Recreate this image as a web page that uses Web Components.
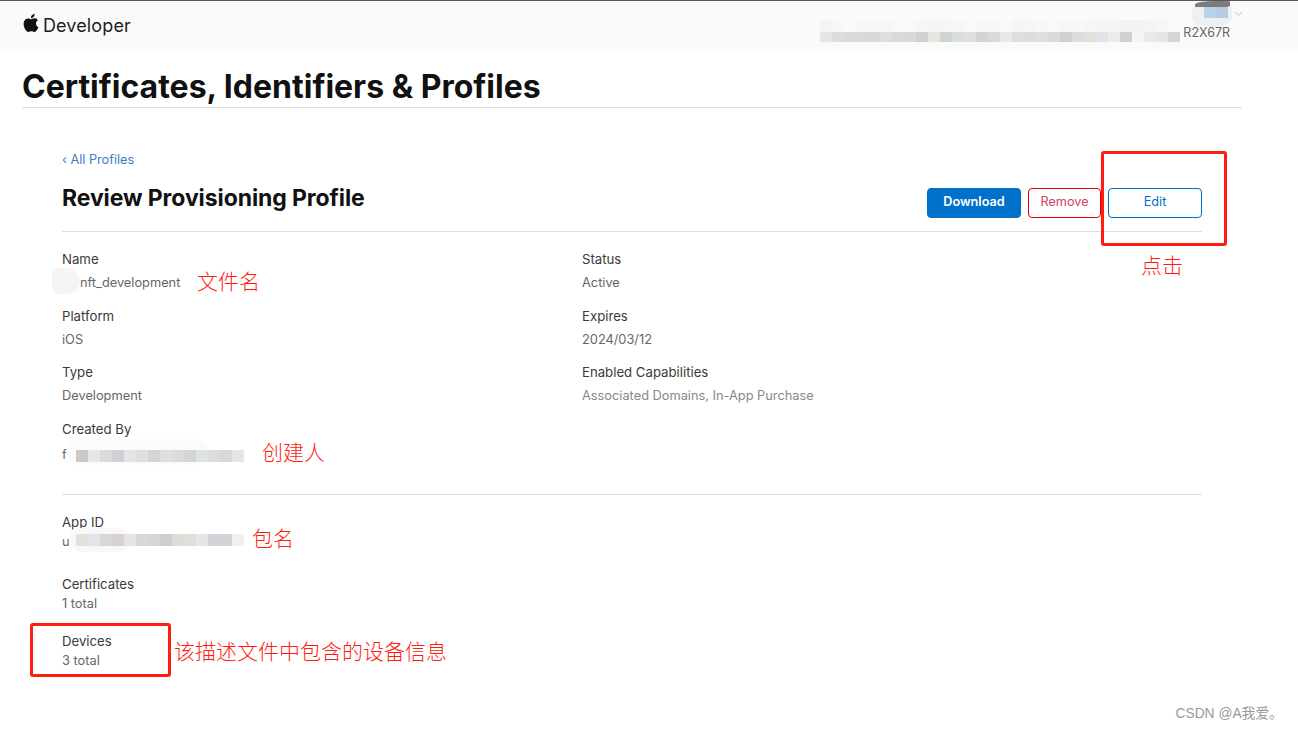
<!DOCTYPE html>
<html lang="en">
<head>
<meta charset="utf-8">
<title>Review Provisioning Profile</title>
<style>
  html, body { margin: 0; height: 100%; overflow: hidden; background: #fff; }
  body { font-family: Inter, "Liberation Sans", "Noto Sans CJK SC", sans-serif; position: relative; }
</style>
</head>
<body>
<dev-header account="R2X67R"></dev-header>
<page-title>Certificates, Identifiers &amp; Profiles</page-title>
<profile-view>
  <profile-head slot="head" back="All Profiles" title="Review Provisioning Profile"></profile-head>

  <profile-section>
    <info-field label="Name" indent>nft_development</info-field>
    <info-field label="Status">Active</info-field>
    <info-field label="Platform">iOS</info-field>
    <info-field label="Expires">2024/03/12</info-field>
    <info-field label="Type">Development</info-field>
    <info-field label="Enabled Capabilities" muted>Associated Domains, In-App Purchase</info-field>
    <info-field label="Created By" tall>f</info-field>
  </profile-section>

  <profile-section single>
    <info-field label="App ID" tight spaced>u</info-field>
    <info-field label="Certificates" tight>1 total</info-field>
    <info-field label="Devices" tight>3 total</info-field>
  </profile-section>
</profile-view>

<!-- redactions and red notes that sit over the page -->
<smear-blob x="52" y="268" w="28" h="26" color="#f5f5f5" radius="30% 55% 50% 25%"></smear-blob>
<mosaic-patch x="820" y="30" colors="e6e6e6 dedcda dcdad8 d8dad8 d8d8d8 dcdee0 dad8d8 dad8d6 cfd1d3 e8e4de d0d2d4 d8dde0 e0dfda d2d4d6 d8dada e8e8e8 dfdedc dcdcda e0dfdc dcdad8 d0d0d0 dcdde2 e2e0da e2e3e6 ebebeb cfd1cf f4f4f4 ebeae8 e6e6e6 d6d6d4"></mosaic-patch>
<mosaic-patch x="820" y="20" colors="f4f4f4 f7f7f7 fafafa f8f8f8 f7f7f7 f7f7f7 f9f9f9 f9f9f9 f6f6f6 f5f5f5 f6f6f6 f7f7f7 f9f9f9 f8f8f8 f7f7f7 f9f9f9 f5f5f5 f6f6f6 f8f8f8 f9f9f9 f7f7f7 f8f8f8 f6f6f6 f5f5f5 f5f5f5 f3f3f3 f3f3f3 f4f4f4 f6f6f6 f9f9f9"></mosaic-patch>
<smear-blob x="1192" y="4" w="40" h="23" color="#eceff3" radius="30% 30% 45% 45%"></smear-blob>
<mosaic-patch x="1204" y="6" colors="b8d2ea b8cbe3"></mosaic-patch>
<smear-blob x="1195" y="1" w="35" h="6" color="#7b7b7d" radius="60% 10% 20% 10%"></smear-blob>

<smear-blob x="68" y="439" w="140" h="26" color="#fbfbfb" radius="12px"></smear-blob>
<mosaic-patch x="76" y="450" colors="cdc9c9 e6e7e8 dcdcd8 cfd1d4 e4e5e6 dedfe0 d6d3d4 dfdfdf dcdcdc d4d5d5 dfe3e5 dedddb d9d8d9 e5e6e6"></mosaic-patch>
<smear-blob x="70" y="528" w="60" h="24" color="#f8f8f8" radius="12px"></smear-blob>
<mosaic-patch x="76" y="534" colors="e2e2da e3e4e8 d8d6d8 d8d2d6 e6e6e6 d8d8da d6d6d2 cfcfcd dcdcd8 dddfda e6e6e6 d5d3da d4d2d6 f0f0f0"></mosaic-patch>

<note-box x="1101" y="151" w="126" h="95"></note-box>
<note-box x="30" y="623" w="141" h="54"></note-box>
<note-text x="197" y="268">文件名</note-text>
<note-text x="1141" y="252">点击</note-text>
<note-text x="262" y="439">创建人</note-text>
<note-text x="252" y="525">包名</note-text>
<note-text x="174" y="638">该描述文件中包含的设备信息</note-text>
<water-mark>CSDN @A我爱。</water-mark>

<script>
class DevHeader extends HTMLElement {
  connectedCallback() {
    this.attachShadow({ mode: 'open' });
    this.shadowRoot.innerHTML = `
      <style>
        :host {
          display: flex;
          justify-content: space-between;
          height: 50px;
          padding: 0 68px 0 22px;
          background: #fafafa;
          border-top: 1px solid #58585a;
        }
        .brand { display: flex; align-items: center; gap: 3px; height: 48px; color: #1d1d1f; font-size: 18px; letter-spacing: 0.12px; }
        .brand svg { width: 18px; height: 20px; margin-top: -5px; fill: #111; }
        .account { align-self: flex-end; margin-bottom: 10px; font-size: 12.5px; line-height: 16px; color: #666; }
        .chev { position: absolute; left: 1234px; top: 11px; width: 9px; height: 6px; fill: none; stroke: #a9c6e6; stroke-width: 1; }
      </style>
      <div class="brand">
        <svg viewBox="0 0 24 24"><path d="M12.152 6.896c-.948 0-2.415-1.078-3.96-1.04-2.04.027-3.91 1.183-4.961 3.014-2.117 3.675-.546 9.103 1.519 12.09 1.013 1.454 2.208 3.09 3.792 3.039 1.52-.065 2.09-.987 3.935-.987 1.831 0 2.35.987 3.96.948 1.637-.026 2.676-1.48 3.676-2.948 1.156-1.688 1.636-3.325 1.662-3.415-.039-.013-3.182-1.221-3.22-4.857-.026-3.04 2.48-4.494 2.597-4.559-1.429-2.09-3.623-2.324-4.39-2.376-2-.156-3.675 1.09-4.61 1.09zM15.53 3.83c.843-1.012 1.4-2.427 1.245-3.83-1.207.052-2.662.805-3.532 1.818-.78.896-1.454 2.338-1.273 3.714 1.338.104 2.715-.688 3.559-1.701"/></svg>
        <span>Developer</span>
      </div>
      <span class="account">${this.getAttribute('account')}</span>
      <svg class="chev" viewBox="0 0 9 6"><path d="M1 1l3.5 3.5L8 1"/></svg>
    `;
  }
}

class PageTitle extends HTMLElement {
  connectedCallback() {
    this.attachShadow({ mode: 'open' });
    this.shadowRoot.innerHTML = `
      <style>
        :host {
          display: block;
          margin: 0 56px 0 22px;
          height: 56px;
          border-bottom: 1px solid #dedede;
          color: #111;
          font-size: 32px;
          font-weight: 700;
          line-height: 71px;
          white-space: nowrap;
        }
      </style>
      <slot></slot>
    `;
  }
}

class ProfileView extends HTMLElement {
  connectedCallback() {
    this.attachShadow({ mode: 'open' });
    this.shadowRoot.innerHTML = `
      <style>
        :host { display: block; padding: 42px 96px 0 62px; }
      </style>
      <slot name="head"></slot>
      <slot></slot>
    `;
  }
}

class ProfileHead extends HTMLElement {
  connectedCallback() {
    this.attachShadow({ mode: 'open' });
    this.shadowRoot.innerHTML = `
      <style>
        :host { display: block; border-bottom: 1px solid #dedede; height: 81px; }
        a { display: block; color: #3d7cc9; font-size: 12.7px; line-height: 20px; text-decoration: none; }
        .row { display: flex; align-items: center; justify-content: space-between; height: 38px; margin-top: 9px; }
        h2 { margin: 0; color: #111; font-size: 23px; font-weight: 700; letter-spacing: -0.1px; line-height: 38px; }
        .actions { display: flex; gap: 7px; margin-top: 10px; }
      </style>
      <a href="#">‹ ${this.getAttribute('back')}</a>
      <div class="row">
        <h2>${this.getAttribute('title')}</h2>
        <div class="actions">
          <action-button kind="primary">Download</action-button>
          <action-button kind="danger">Remove</action-button>
          <action-button kind="plain">Edit</action-button>
        </div>
      </div>
    `;
  }
}

class ActionButton extends HTMLElement {
  connectedCallback() {
    this.attachShadow({ mode: 'open' });
    const kind = this.getAttribute('kind');
    const look = {
      primary: 'width:94px; background:#0070c9; border-color:#0070c9; color:#fff; font-weight:600;',
      danger: 'width:73px; background:#fff; border-color:#e30000; color:#d6405f;',
      plain: 'width:94px; background:#fff; border-color:#0070c9; color:#0070c9;'
    }[kind];
    this.shadowRoot.innerHTML = `
      <style>
        :host { display: block; }
        button {
          display: block;
          box-sizing: border-box;
          height: 30px;
          padding: 0 0 3px;
          border: 1px solid;
          border-radius: 4px;
          font: inherit;
          font-size: 12.7px;
          cursor: pointer;
          ${look}
        }
      </style>
      <button><slot></slot></button>
    `;
  }
}

class ProfileSection extends HTMLElement {
  connectedCallback() {
    this.attachShadow({ mode: 'open' });
    const single = this.hasAttribute('single');
    this.shadowRoot.innerHTML = `
      <style>
        :host {
          display: grid;
          grid-template-columns: ${single ? '1fr' : '520px 1fr'};
          row-gap: ${single ? '19px' : '9.5px'};
          padding: ${single ? '18px 0 0' : '16px 0 0'};
          ${single ? '' : 'height: 246px; align-content: start; border-bottom: 1px solid #dedede;'}
        }
      </style>
      <slot></slot>
    `;
  }
}

class InfoField extends HTMLElement {
  connectedCallback() {
    this.attachShadow({ mode: 'open' });
    const tight = this.hasAttribute('tight');
    const tall = this.hasAttribute('tall');
    this.shadowRoot.innerHTML = `
      <style>
        :host { display: block; font-size: 12.8px; ${this.hasAttribute('spaced') ? 'margin-bottom: 5px;' : ''} }
        .label { color: #3a3a3a; font-size: 13.2px; line-height: ${tight ? '19px' : '23px'}; }
        .value {
          color: ${this.hasAttribute('muted') ? '#888' : '#666'};
          line-height: ${tight ? '19px' : tall ? '28px' : '24px'};
          ${this.hasAttribute('indent') ? 'padding-left: 18px;' : ''}
        }
      </style>
      <div class="label">${this.getAttribute('label')}</div>
      <div class="value"><slot></slot></div>
    `;
  }
}

class MosaicPatch extends HTMLElement {
  connectedCallback() {
    this.attachShadow({ mode: 'open' });
    const cells = this.getAttribute('colors').split(' ')
      .map(c => `<i style="background:#${c}"></i>`).join('');
    this.shadowRoot.innerHTML = `
      <style>
        :host { position: absolute; left: ${this.getAttribute('x')}px; top: ${this.getAttribute('y')}px; display: flex; }
        i { display: block; width: 12px; height: 12px; }
      </style>
      ${cells}
    `;
  }
}

class SmearBlob extends HTMLElement {
  connectedCallback() {
    this.attachShadow({ mode: 'open' });
    this.shadowRoot.innerHTML = `
      <style>
        :host {
          position: absolute;
          left: ${this.getAttribute('x')}px;
          top: ${this.getAttribute('y')}px;
          width: ${this.getAttribute('w')}px;
          height: ${this.getAttribute('h')}px;
          border-radius: ${this.getAttribute('radius') || '40%'};
          background: ${this.getAttribute('color') || '#f4f4f4'};
        }
      </style>
    `;
  }
}

class NoteBox extends HTMLElement {
  connectedCallback() {
    this.attachShadow({ mode: 'open' });
    this.shadowRoot.innerHTML = `
      <style>
        :host {
          position: absolute;
          box-sizing: border-box;
          left: ${this.getAttribute('x')}px;
          top: ${this.getAttribute('y')}px;
          width: ${this.getAttribute('w')}px;
          height: ${this.getAttribute('h')}px;
          border: 3px solid #ff1d12;
          border-radius: 3px;
        }
      </style>
    `;
  }
}

class NoteText extends HTMLElement {
  connectedCallback() {
    this.attachShadow({ mode: 'open' });
    this.shadowRoot.innerHTML = `
      <style>
        :host {
          position: absolute;
          left: ${this.getAttribute('x')}px;
          top: ${this.getAttribute('y')}px;
          color: #ff1d12;
          font-family: "Noto Sans CJK SC", sans-serif;
          font-size: 21px;
          font-weight: 300;
          line-height: 24px;
          white-space: nowrap;
        }
      </style>
      <slot></slot>
    `;
  }
}

class WaterMark extends HTMLElement {
  connectedCallback() {
    this.attachShadow({ mode: 'open' });
    this.shadowRoot.innerHTML = `
      <style>
        :host {
          position: absolute;
          right: 15px;
          top: 704px;
          color: #9a9a9a;
          font-family: "Liberation Sans", "Noto Sans CJK SC", sans-serif;
          font-size: 13.8px;
          line-height: 20px;
          white-space: nowrap;
        }
      </style>
      <slot></slot>
    `;
  }
}

customElements.define('dev-header', DevHeader);
customElements.define('page-title', PageTitle);
customElements.define('profile-view', ProfileView);
customElements.define('profile-head', ProfileHead);
customElements.define('action-button', ActionButton);
customElements.define('profile-section', ProfileSection);
customElements.define('info-field', InfoField);
customElements.define('mosaic-patch', MosaicPatch);
customElements.define('smear-blob', SmearBlob);
customElements.define('note-box', NoteBox);
customElements.define('note-text', NoteText);
customElements.define('water-mark', WaterMark);
</script>
</body>
</html>
